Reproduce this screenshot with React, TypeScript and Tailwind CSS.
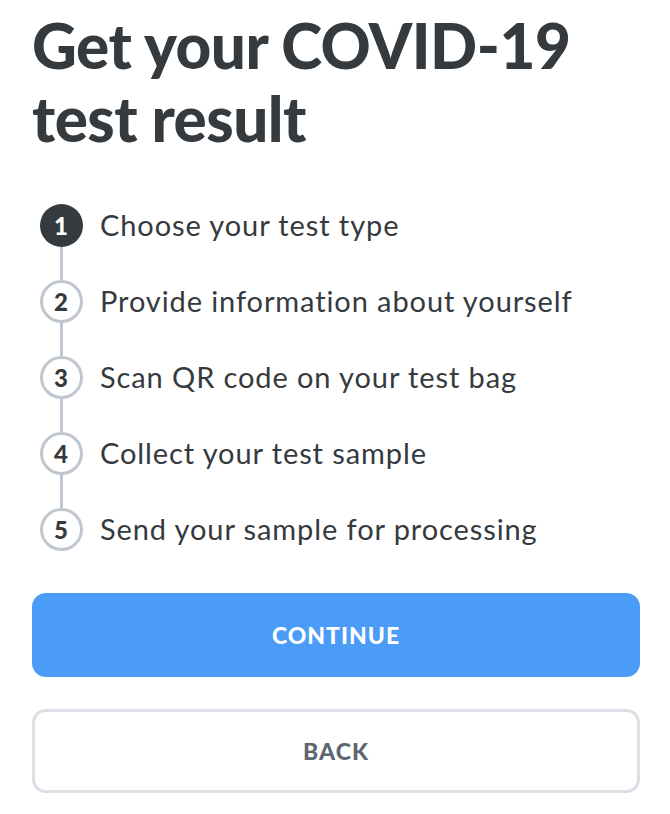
import React from 'react';

const steps = [
  'Choose your test type',
  'Provide information about yourself',
  'Scan QR code on your test bag',
  'Collect your test sample',
  'Send your sample for processing',
];

const App: React.FC = () => {
  const current = 0;

  return (
    <div className="min-h-screen bg-white pl-[32px] pr-[30px] pt-[9px] font-['Lato',sans-serif] text-[#353a3f]">
      {/* Title */}
      <h1 className="text-[62px] font-black leading-[73px] tracking-[-0.5px]">
        Get your COVID-19
        <br />
        test result
      </h1>

      {/* Steps */}
      <ol className="mt-[49px] flex flex-col">
        {steps.map((step, i) => (
          <li key={step} className="flex items-stretch">
            <div className="flex w-[58px] flex-col items-center">
              <div
                className={
                  i === current
                    ? 'flex h-[43px] w-[43px] shrink-0 items-center justify-center rounded-full bg-[#353a3f] text-[24px] font-black text-white'
                    : 'flex h-[43px] w-[43px] shrink-0 items-center justify-center rounded-full border-[3px] border-[#c1c7d1] text-[24px] font-black text-[#353a3f]'
                }
              >
                {i + 1}
              </div>
              {i < steps.length - 1 && <div className="h-[33px] w-[3px] bg-[#c1c7d1]" />}
            </div>
            <span className="ml-[10px] mt-[2px] text-[29px] leading-[38px] tracking-[0.9px]">{step}</span>
          </li>
        ))}
      </ol>

      {/* Actions */}
      <div className="mt-[42px] flex flex-col gap-[32px]">
        <button className="h-[84px] w-full rounded-[14px] bg-[#4a9cf8] text-[23px] font-black tracking-[1px] text-white">
          CONTINUE
        </button>
        <button className="h-[84px] w-full rounded-[14px] border-[3px] border-[#dcdfe5] bg-white text-[23px] font-black tracking-[1px] text-[#5f6672]">
          BACK
        </button>
      </div>
    </div>
  );
};

export default App;
